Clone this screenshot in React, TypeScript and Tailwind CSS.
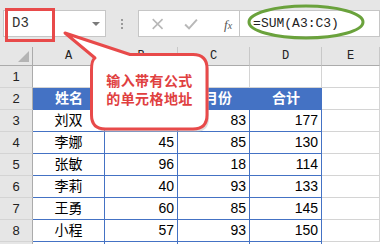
const rows: [string, string, string, string][] = [
  ["刘双", "94", "83", "177"],
  ["李娜", "45", "85", "130"],
  ["张敏", "96", "18", "114"],
  ["李莉", "40", "93", "133"],
  ["王勇", "60", "85", "145"],
  ["小程", "57", "93", "150"],
];

const sans = "font-['Liberation_Sans','Noto_Sans_CJK_SC',sans-serif]";
const mono = "font-['Liberation_Mono','Noto_Sans_CJK_SC',monospace]";

function RowHead({ n }: { n?: number }) {
  return (
    <div className={`h-[22px] bg-[#e6e6e6] border-r border-r-[#ababab] border-b border-b-[#d4d4d4] flex items-center justify-center text-[13px] text-[#222] ${sans}`}>
      {n}
    </div>
  );
}

function Gray() {
  return <div className="h-[22px] bg-white border-r border-b border-[#d4d4d4]" />;
}

export default function App() {
  return (
    <div className="relative w-[380px] h-[244px] overflow-hidden bg-white">
      {/* formula bar strip */}
      <div className="h-[47px] bg-[#e6e6e6] flex items-start pt-[10px] pl-[3px]">
        <div className={`w-[103px] h-[27px] bg-white border border-[#c6c6c6] flex items-center justify-between pl-[8px] pr-[5px] text-[14px] text-[#333] ${mono}`}>
          <span>D3</span>
          <span className="w-0 h-0 border-l-[4px] border-r-[4px] border-t-[4px] border-l-transparent border-r-transparent border-t-[#7a7a7a]" />
        </div>
        <div className="w-[32px] h-[27px] flex flex-col items-center justify-center gap-[2px]">
          <span className="w-[2px] h-[2px] bg-[#9a9a9a]" />
          <span className="w-[2px] h-[2px] bg-[#9a9a9a]" />
          <span className="w-[2px] h-[2px] bg-[#9a9a9a]" />
        </div>
        <div className="w-[107px] h-[27px] bg-white border border-[#c6c6c6] flex items-center">
          <svg width="107" height="27" viewBox="0 0 107 27">
            <path d="M14 9 L24 19 M24 9 L14 19" stroke="#b8b8b8" strokeWidth="1.6" fill="none" />
            <path d="M47 14.5 L51 18.5 L59 9.5" stroke="#b8b8b8" strokeWidth="2" fill="none" />
          </svg>
        </div>
        <div className="relative -ml-[21px] mt-[5px] text-[13px] italic text-[#555] font-['Liberation_Serif',serif]">
          f<span className="text-[10px]">x</span>
        </div>
        <div className={`ml-[7px] flex-1 h-[27px] bg-white border border-[#c6c6c6] flex items-center pl-[13px] text-[13px] text-[#222] ${mono}`}>
          =SUM(A3:C3)
        </div>
      </div>

      {/* sheet */}
      <div className="grid grid-cols-[33px_72px_73px_72px_72px_1fr]">
        <div className="h-[19px] bg-[#e6e6e6] border-r border-b border-[#ababab] flex items-end justify-end pr-[3px] pb-[3px]">
          <svg width="11" height="11" viewBox="0 0 11 11">
            <path d="M11 0 L11 11 L0 11 Z" fill="#b4b4b4" />
          </svg>
        </div>
        {["A", "B", "C", "D", "E"].map((c) => (
          <div key={c} className={`h-[19px] bg-[#e6e6e6] border-r border-r-[#c8c8c8] border-b border-b-[#ababab] flex items-center justify-center text-[12px] text-[#222] ${mono}`}>
            {c}
          </div>
        ))}

        <RowHead n={1} />
        <Gray />
        <Gray />
        <Gray />
        <Gray />
        <Gray />

        <RowHead n={2} />
        {["姓名", "1月份", "2月份", "合计"].map((h) => (
          <div key={h} className={`h-[22px] bg-[#4472c4] border-b border-[#4472c4] flex items-center justify-center text-[14px] font-bold text-white ${sans}`}>
            {h}
          </div>
        ))}
        <Gray />

        {rows.map((r, i) => (
          <div key={i} className="contents">
            <RowHead n={i + 3} />
            <div className={`h-[22px] border-r border-b border-[#4472c4] flex items-center justify-center text-[14px] text-black ${sans}`}>
              {r[0]}
            </div>
            {r.slice(1).map((v, j) => (
              <div key={j} className={`h-[22px] border-r border-b border-[#4472c4] flex items-center justify-end pr-[3px] text-[14px] text-black ${sans}`}>
                {v}
              </div>
            ))}
            <Gray />
          </div>
        ))}
        <RowHead />
        <div className="h-[22px] border-r border-[#4472c4]" />
        <div className="h-[22px] border-r border-[#4472c4]" />
        <div className="h-[22px] border-r border-[#4472c4]" />
        <div className="h-[22px] border-r border-[#4472c4]" />
        <div className="h-[22px]" />
      </div>

      {/* annotations */}
      <svg className="absolute left-0 top-0" width="380" height="244" viewBox="0 0 380 244">
        <rect x="6.5" y="9.5" width="47" height="31" fill="none" stroke="#e84a4a" strokeWidth="3" />
        <ellipse cx="306" cy="22" rx="57" ry="16" fill="none" stroke="#6aa23c" strokeWidth="3" />
        <path
          d="M65 33 L130 54.5 L193 54.5 Q207 54.5 207 68.5 L207 115 Q207 129 193 129 L105.5 129 Q91.5 129 91.5 115 L91.5 70 Q91.5 60 95 58 Z"
          fill="#bdbdbd"
          opacity="0.5"
          transform="translate(2 3)"
        />
        <path
          d="M65 33 L130 54.5 L193 54.5 Q207 54.5 207 68.5 L207 115 Q207 129 193 129 L105.5 129 Q91.5 129 91.5 115 L91.5 70 Q91.5 60 95 58 Z"
          fill="white"
          stroke="#e84a4a"
          strokeWidth="3"
          strokeLinejoin="round"
        />
      </svg>
      <div className={`absolute left-[92px] top-[72px] w-[115px] flex flex-col items-center leading-[18px] text-[14px] font-bold tracking-[0.4px] text-[#e0403f] ${sans}`}>
        <span>输入带有公式</span>
        <span>的单元格地址</span>
      </div>
    </div>
  );
}
